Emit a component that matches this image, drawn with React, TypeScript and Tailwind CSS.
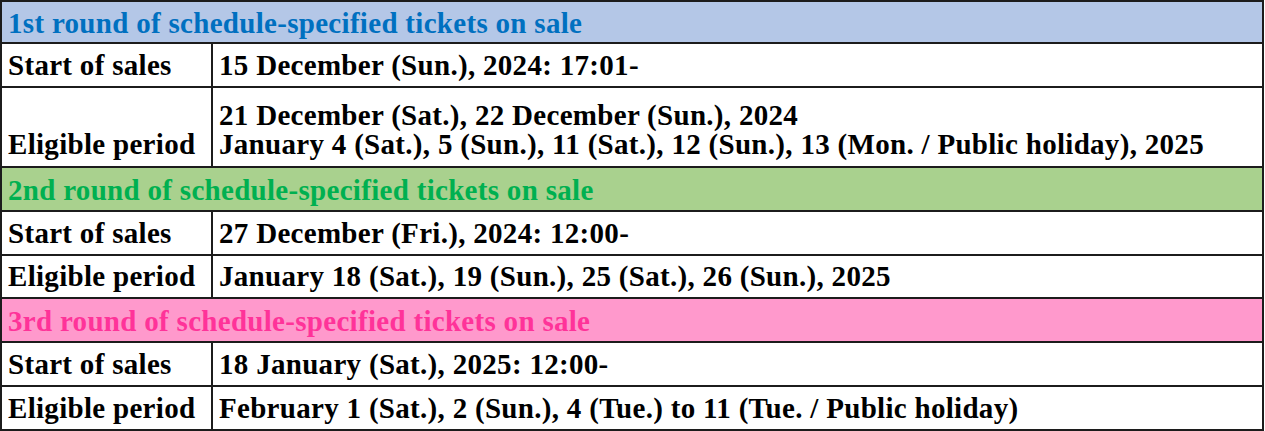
import React from "react";

const font = { fontFamily: '"Liberation Serif", "Times New Roman", serif' };

function Header({ text, bg, color, h }: { text: string; bg: string; color: string; h: string }) {
  return (
    <div className={`flex items-center border-b-2 border-[#1c1c1c] pl-[6px] pt-[2px] ${bg} ${color} ${h}`}>
      {text}
    </div>
  );
}

function Row({ label, lines, h, end }: { label: string; lines: string[]; h: string; end?: boolean }) {
  return (
    <div className={`flex border-b-2 border-[#1c1c1c] ${h}`}>
      <div
        className={`flex w-[211px] shrink-0 border-r-2 border-[#1c1c1c] pl-[6px] ${
          end ? "items-end pb-[7px]" : "items-center"
        }`}
      >
        {label}
      </div>
      <div className={`flex flex-col pl-[6px] ${end ? "justify-end pb-[7px]" : "justify-center"}`}>
        {lines.map((l) => (
          <div key={l}>{l}</div>
        ))}
      </div>
    </div>
  );
}

export default function App() {
  return (
    <div className="bg-white w-[1265px] h-[431px]">
      <div
        style={font}
        className="w-[1264px] border-l-2 border-r-2 border-t-2 border-[#1c1c1c] text-[29px] leading-[29px] tracking-[0.3px] font-bold text-black"
      >
        <Header
          text="1st round of schedule-specified tickets on sale"
          bg="bg-[#b4c7e7]"
          color="text-[#0070c0]"
          h="h-[42px]"
        />
        <Row label="Start of sales" lines={["15 December (Sun.), 2024: 17:01-"]} h="h-[44px]" />
        <Row
          label="Eligible period"
          lines={[
            "21 December (Sat.), 22 December (Sun.), 2024",
            "January 4 (Sat.), 5 (Sun.), 11 (Sat.), 12 (Sun.), 13 (Mon. / Public holiday), 2025",
          ]}
          h="h-[80px]"
          end
        />
        <Header
          text="2nd round of schedule-specified tickets on sale"
          bg="bg-[#a9d18e]"
          color="text-[#00b050]"
          h="h-[44px]"
        />
        <Row label="Start of sales" lines={["27 December (Fri.), 2024: 12:00-"]} h="h-[44px]" />
        <Row
          label="Eligible period"
          lines={["January 18 (Sat.), 19 (Sun.), 25 (Sat.), 26 (Sun.), 2025"]}
          h="h-[43px]"
        />
        <Header
          text="3rd round of schedule-specified tickets on sale"
          bg="bg-[#ff99cc]"
          color="text-[#ff3399]"
          h="h-[44px]"
        />
        <Row label="Start of sales" lines={["18 January (Sat.), 2025: 12:00-"]} h="h-[44px]" />
        <Row
          label="Eligible period"
          lines={["February 1 (Sat.), 2 (Sun.), 4 (Tue.) to 11 (Tue. / Public holiday)"]}
          h="h-[44px]"
        />
      </div>
    </div>
  );
}
